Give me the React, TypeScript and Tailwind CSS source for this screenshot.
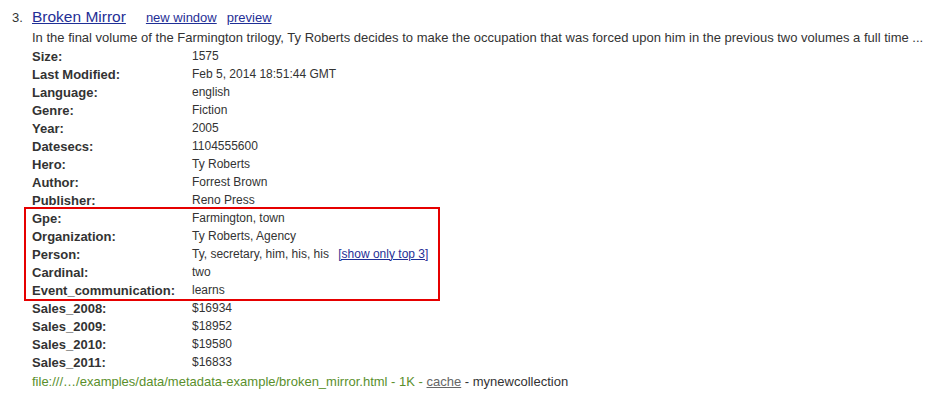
import React from "react";

const rowsTop: [string, React.ReactNode][] = [
  ["Size:", "1575"],
  ["Last Modified:", "Feb 5, 2014 18:51:44 GMT"],
  ["Language:", "english"],
  ["Genre:", "Fiction"],
  ["Year:", "2005"],
  ["Datesecs:", "1104555600"],
  ["Hero:", "Ty Roberts"],
  ["Author:", "Forrest Brown"],
  ["Publisher:", "Reno Press"],
];

const rowsBox: [string, React.ReactNode][] = [
  ["Gpe:", "Farmington, town"],
  ["Organization:", "Ty Roberts, Agency"],
  [
    "Person:",
    <>
      Ty, secretary, him, his, his{" "}
      <a href="#" className="ml-[6px] text-[12px] text-[#1f2f96] underline">
        [show only top 3]
      </a>
    </>,
  ],
  ["Cardinal:", "two"],
  ["Event_communication:", "learns"],
];

const rowsBottom: [string, React.ReactNode][] = [
  ["Sales_2008:", "$16934"],
  ["Sales_2009:", "$18952"],
  ["Sales_2010:", "$19580"],
  ["Sales_2011:", "$16833"],
];

function Row({ label, value }: { label: string; value: React.ReactNode }) {
  return (
    <div className="flex h-[18px] items-center">
      <div className="w-[160px] shrink-0 pt-[2px] text-[13px] font-bold leading-[16px] text-[#333]">
        {label}
      </div>
      <div className="text-[12px] leading-[16px] text-[#333]">{value}</div>
    </div>
  );
}

export default function App() {
  return (
    <div
      className="min-h-[406px] w-[948px] bg-white pl-[12px] pt-[7px]"
      style={{ fontFamily: '"Liberation Sans", Arial, sans-serif' }}
    >
      <div className="flex items-baseline">
        <span className="w-[20px] text-[13px] text-[#333]">3.</span>
        <a href="#" className="text-[15.5px] leading-[20px] text-[#1f2f96] underline">
          Broken Mirror
        </a>
        <a href="#" className="ml-[20px] text-[13px] text-[#1f2f96] underline">
          new window
        </a>
        <a href="#" className="ml-[10px] text-[13px] text-[#1f2f96] underline">
          preview
        </a>
      </div>
      <div className="pl-[20px]">
        <div className="h-[19px] pt-[2px] text-[13px] leading-[16px] text-[#333]">
          In the final volume of the Farmington trilogy, Ty Roberts decides to make the occupation that
          was forced upon him in the previous two volumes a full time ...
        </div>
        {rowsTop.map(([l, v]) => (
          <Row key={l} label={l} value={v} />
        ))}
        <div className="-ml-[6px] w-[412px] pl-[6px] outline-2 outline-[#e60000]">
          {rowsBox.map(([l, v]) => (
            <Row key={l} label={l} value={v} />
          ))}
        </div>
        {rowsBottom.map(([l, v]) => (
          <Row key={l} label={l} value={v} />
        ))}
        <div className="mt-[3px] text-[13px] leading-[16px] text-[#5a8f2c]">
          file:///…/examples/data/metadata-example/broken_mirror.html - 1K -{" "}
          <a href="#" className="text-[#666] underline">
            cache
          </a>{" "}
          <span className="text-[#333]">- mynewcollection</span>
        </div>
      </div>
    </div>
  );
}
